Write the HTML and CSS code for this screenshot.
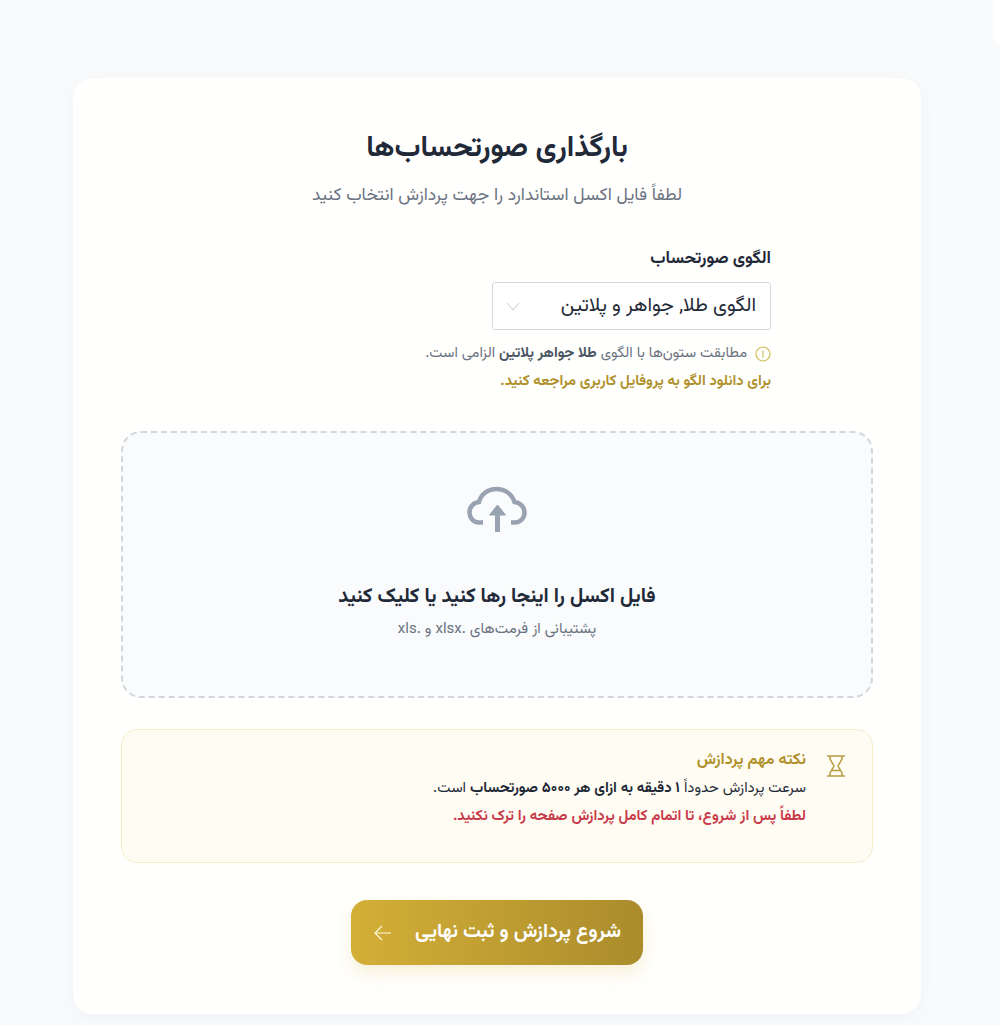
FILE: index.html
```html
<!DOCTYPE html>
<html lang="fa" dir="rtl">
<head>
<meta charset="utf-8">
<title>بارگذاری صورتحساب‌ها</title>
<link rel="stylesheet" href="styles.css">
</head>
<body>
<div class="corner"></div>
<main class="page">
  <section class="card">
    <header class="head">
      <h1 class="title">بارگذاری صورتحساب‌ها</h1>
      <p class="subtitle">لطفاً فایل اکسل استاندارد را جهت پردازش انتخاب کنید</p>
    </header>

    <div class="template">
      <label class="label">الگوی صورتحساب</label>
      <div class="select">
        <span class="select-value">الگوی طلا, جواهر و پلاتین</span>
        <svg class="chevron" viewBox="0 0 14 14" width="14" height="14" fill="none" stroke="#c4c7cc" stroke-width="1"><path d="M1 4l6 7 6-7"/></svg>
      </div>
      <p class="hint">
        <svg class="info" viewBox="0 0 16 16" width="16" height="16" fill="none" stroke="#cdbd55" stroke-width="1.200"><circle cx="8" cy="8" r="7"/><path d="M8 4.500v7"/></svg>
        <span>مطابقت ستون‌ها با الگوی <b>طلا جواهر پلاتین</b> الزامی است.</span>
      </p>
      <p class="download">برای دانلود الگو به پروفایل کاربری مراجعه کنید.</p>
    </div>

    <div class="drop">
      <svg class="cloud" viewBox="0 0 60 46" width="60" height="46" fill="none" stroke="#98a2b0" stroke-width="4.500">
        <path d="M16 36.500H12C6 36.500 2.500 31.500 2.500 26.500 2.500 21 6.500 16.500 12 16 14 8 21 3 29.500 3 38 3 45 8 47.500 16 53 16.500 57.500 21 57.500 26.500 57.500 32 53.500 36.500 48 36.500H44"/>
        <path d="M30.500 46V28" stroke-width="5"/>
        <path d="M30.500 19L22.500 29h16z" fill="#98a2b0" stroke="#98a2b0" stroke-width="1"/>
      </svg>
      <h2 class="drop-title">فایل اکسل را اینجا رها کنید یا کلیک کنید</h2>
      <p class="drop-sub">پشتیبانی از فرمت‌های .xlsx و .xls</p>
    </div>

    <aside class="notice">
      <svg class="glass" viewBox="0 0 18 22" width="18" height="22" fill="none" stroke="#b79c42" stroke-width="1.500"><path d="M0 1h18M0 21h18M3 1v3L7 11 3 18v3M15 1v3L11 11 15 18v3M4.500 15.500h9"/></svg>
      <div class="notice-body">
        <h3 class="notice-title">نکته مهم پردازش</h3>
        <p class="notice-line">سرعت پردازش حدوداً <b>۱ دقیقه به ازای هر ۵۰۰۰ صورتحساب</b> است.</p>
        <p class="notice-warn">لطفاً پس از شروع، تا اتمام کامل پردازش صفحه را ترک نکنید.</p>
      </div>
    </aside>

    <div class="actions">
      <button class="submit" type="button">
        <span>شروع پردازش و ثبت نهایی</span>
        <svg viewBox="0 0 18 16" width="18" height="16" fill="none" stroke="#fff8e0" stroke-width="1.200"><path d="M17 8H1M8 1L1 8l7 7"/></svg>
      </button>
    </div>
  </section>
</main>
</body>
</html>
```
FILE: styles.css
```css
* { box-sizing: border-box; }
html, body { margin: 0; height: 100%; }
body {
  background: #f9fafc;
  color: #1f2937;
  font-family: "Vazirmatn", "Noto Sans", sans-serif;
  overflow: hidden;
  position: relative;
}
.corner {
  position: absolute;
  top: -10px;
  left: 993px;
  width: 40px;
  height: 55px;
  background: #fffffd;
  border-radius: 10px;
}
.page {
  padding: 78px 6px 0 0;
  display: flex;
  justify-content: center;
}
.card {
  width: 848px;
  height: 936px;
  background: #fffffe;
  border-radius: 20px;
  padding: 48px;
  box-shadow: 0 4px 20px rgba(30, 40, 90, 0.035);
}
.head { text-align: center; }
.title {
  margin: 3px 0 0;
  font-size: 29px;
  line-height: 40px;
  font-weight: 700;
  color: #1f2937;
}
.subtitle {
  margin: 14px 0 0;
  font-size: 17.600px;
  line-height: 26px;
  color: #6b7280;
}
.template {
  width: 550px;
  margin: 38px auto 0;
  padding-inline-start: 1px;
}
.label {
  display: block;
  font-size: 17px;
  line-height: 24px;
  font-weight: 700;
  color: #1f2937;
}
.select {
  width: 279px;
  height: 48px;
  margin-top: 11px;
  padding: 0 14px 0 13px;
  background: #fff;
  border: 1px solid #d5d8dc;
  border-radius: 3px;
  display: flex;
  align-items: center;
  justify-content: space-between;
}
.select-value { font-size: 19.700px; color: #1f2937; }
.hint {
  margin: 14px 0 0;
  display: flex;
  align-items: center;
  gap: 8px;
  font-size: 14.700px;
  line-height: 20px;
  color: #6b7280;
}
.hint b { color: #4b5563; }
.download {
  margin: 8px 0 0;
  font-size: 14.700px;
  line-height: 20px;
  font-weight: 700;
  color: #b0912c;
}
.drop {
  height: 267px;
  margin-top: 39px;
  background: #f9fbfd;
  border: 2px dashed #d3d6db;
  border-radius: 20px;
  display: flex;
  flex-direction: column;
  align-items: center;
  padding-top: 53px;
}
.cloud { display: block; }
.drop-title {
  margin: 51px 0 0;
  font-size: 20.100px;
  line-height: 28px;
  font-weight: 700;
  color: #1f2937;
}
.drop-sub {
  margin: 9px 0 0;
  font-size: 15px;
  line-height: 20px;
  color: #6b7280;
}
.notice {
  height: 134px;
  margin-top: 31px;
  padding: 19px 27px 0 0;
  background: #fffdf3;
  border: 1px solid #f5edcc;
  border-radius: 16px;
  display: flex;
  gap: 21px;
}
.glass { margin-top: 6px; flex: none; }
.notice-title {
  margin: 0;
  font-size: 16px;
  line-height: 24px;
  font-weight: 700;
  color: #b0912c;
}
.notice-line {
  margin: 5px 0 0;
  font-size: 14.800px;
  line-height: 22px;
  color: #1f2937;
}
.notice-warn {
  margin: 6px 0 0;
  font-size: 14.850px;
  line-height: 22px;
  font-weight: 700;
  color: #c93a4a;
}
.actions {
  margin-top: 37px;
  display: flex;
  justify-content: center;
}
.submit {
  width: 292px;
  height: 65px;
  padding: 0 22px 0 23px;
  border: 0;
  border-radius: 16px;
  background: linear-gradient(90deg, #d4af37, #aa8c2c);
  box-shadow: 0 8px 20px rgba(212, 175, 55, 0.2);
  color: #fff;
  font-family: inherit;
  font-size: 19.700px;
  font-weight: 700;
  display: flex;
  align-items: center;
  justify-content: space-between;
}
```
